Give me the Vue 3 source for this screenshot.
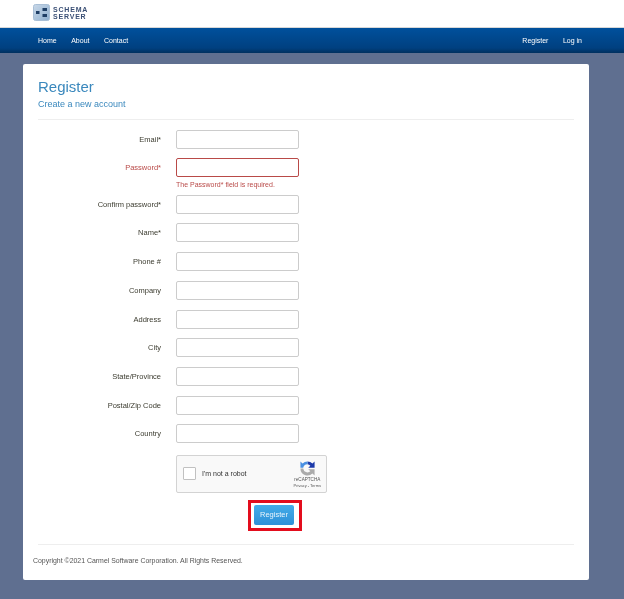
<script setup>
const fields = [
  { label: 'Email*' },
  { label: 'Password*', error: 'The Password* field is required.' },
  { label: 'Confirm password*' },
  { label: 'Name*' },
  { label: 'Phone #' },
  { label: 'Company' },
  { label: 'Address' },
  { label: 'City' },
  { label: 'State/Province' },
  { label: 'Postal/Zip Code' },
  { label: 'Country' }
]
</script>

<template>
  <div class="page">
    <header class="brand">
      <svg class="logo" width="17" height="17" viewBox="0 0 17 17" aria-hidden="true">
        <defs>
          <linearGradient id="logoFill" x1="0" y1="0" x2="1" y2="1">
            <stop offset="0" stop-color="#c9d8e8" />
            <stop offset="1" stop-color="#8fb0d0" />
          </linearGradient>
        </defs>
        <rect x="0.5" y="0.5" width="16" height="16" rx="2" fill="url(#logoFill)" stroke="#a9bfd6" />
        <rect x="3" y="7" width="3.5" height="3" fill="#1f3f66" />
        <rect x="9.5" y="4" width="4.5" height="3" fill="#1f3f66" />
        <rect x="9.5" y="10" width="4.5" height="3" fill="#1f3f66" />
      </svg>
      <div class="brand-name">SCHEMA<br />SERVER</div>
    </header>

    <nav class="nav">
      <div class="nav-group">
        <a>Home</a>
        <a>About</a>
        <a>Contact</a>
      </div>
      <div class="nav-group">
        <a>Register</a>
        <a>Log in</a>
      </div>
    </nav>

    <main class="card">
      <h1>Register</h1>
      <h2>Create a new account</h2>
      <hr class="rule" />

      <form class="form" @submit.prevent>
        <template v-for="f in fields" :key="f.label">
          <label :class="{ bad: f.error }">{{ f.label }}</label>
          <div class="control">
            <input type="text" :class="{ bad: f.error }" />
            <span v-if="f.error" class="error">{{ f.error }}</span>
          </div>
        </template>

        <div class="recaptcha">
          <span class="check"></span>
          <span class="robot">I'm not a robot</span>
          <div class="rc-brand">
            <svg width="17" height="17" viewBox="0 0 24 24" aria-hidden="true">
              <path d="M12 2a10 10 0 0 1 7 3l3-3v9h-9l3-3a6 6 0 0 0-4-2z" fill="#1c3aa9" />
              <path d="M12 2a10 10 0 0 0-7 3L2 2v9h4a6 6 0 0 1 6-5z" fill="#4a90e2" />
              <path d="M2 12a10 10 0 0 0 17 7l3 3v-9h-9l3 3a6 6 0 0 1-10-4z" fill="#ababab" />
            </svg>
            <span class="rc-name">reCAPTCHA</span>
            <span class="rc-links">Privacy - Terms</span>
          </div>
        </div>

        <div class="submit-row">
          <div class="highlight">
            <button type="submit">Register</button>
          </div>
        </div>
      </form>

      <hr class="rule foot-rule" />
      <p class="copy">Copyright ©2021 Carmel Software Corporation. All Rights Reserved.</p>
    </main>
  </div>
</template>

<style>
html, body { margin: 0; background: #5f6f90; }
</style>

<style scoped>
.page {
  height: 599px;
  overflow: hidden;
  background: #5f6f90;
  font-family: "Liberation Sans", Arial, sans-serif;
  filter: blur(0.35px);
}
.brand {
  height: 28px;
  box-sizing: border-box;
  background: #fff;
  border-bottom: 1px solid #d8d8d8;
  display: flex;
  align-items: flex-start;
  gap: 3px;
  padding: 4px 0 0 33px;
}
.brand-name {
  font-size: 7px;
  font-weight: 700;
  line-height: 7px;
  letter-spacing: 0.8px;
  color: #3a4f75;
  margin-top: 2px;
}
.nav {
  height: 25px;
  background: linear-gradient(#00509c, #004080 80%, #00305f);
  display: flex;
  justify-content: space-between;
  align-items: center;
  padding: 0 42px 0 38px;
}
.nav-group { display: flex; gap: 14.5px; }
.nav a { color: #fff; font-size: 7px; }
.card {
  margin: 11px 35px 0 23px;
  height: 516px;
  box-sizing: border-box;
  background: #fff;
  border-radius: 2px;
  padding: 14px 15px 0;
}
h1 {
  margin: 0;
  font-size: 15px;
  font-weight: 400;
  line-height: 17px;
  color: #3a88bd;
}
h2 {
  margin: 4px 0 0;
  font-size: 9px;
  font-weight: 400;
  line-height: 11px;
  color: #3a88bd;
}
.rule {
  border: 0;
  border-top: 1px solid #eeeeee;
  margin: 9px 0 0;
}
.form {
  display: grid;
  grid-template-columns: 123px 123px;
  column-gap: 15px;
  row-gap: 9.7px;
  margin-top: 9.6px;
  align-items: start;
}
label {
  font-size: 7.5px;
  line-height: 19px;
  text-align: right;
  color: #3c3c30;
}
label.bad { color: #b94a48; }
.control { display: flex; flex-direction: column; }
input {
  height: 19px;
  width: 123px;
  box-sizing: border-box;
  border: 1px solid #cccccc;
  border-radius: 2px;
  background: #fff;
  padding: 0;
}
input.bad { border-color: #b94a48; }
.error {
  font-size: 7px;
  line-height: 9px;
  margin-top: 3px;
  margin-bottom: -4.2px;
  color: #b94a48;
}
.recaptcha {
  grid-column: 2;
  width: 151px;
  height: 38px;
  margin-top: 2px;
  box-sizing: border-box;
  background: #f9f9f9;
  border: 1px solid #d3d3d3;
  border-radius: 2px;
  display: flex;
  align-items: center;
  padding: 0 5px 0 6px;
}
.check {
  width: 13px;
  height: 13px;
  box-sizing: border-box;
  border: 1px solid #c1c1c1;
  border-radius: 1px;
  background: #fff;
  margin-right: 6px;
}
.robot { font-size: 7px; color: #333; }
.rc-brand {
  margin-left: auto;
  display: flex;
  flex-direction: column;
  align-items: center;
  color: #555;
}
.rc-name { font-size: 4.6px; line-height: 6px; }
.rc-links { font-size: 4px; line-height: 5px; }
.submit-row {
  grid-column: 1 / 3;
  display: flex;
  padding-left: 210px;
  margin-top: -3px;
}
.highlight {
  flex: none;
  box-sizing: border-box;
  width: 54px;
  height: 31px;
  border: 3px solid #e30d1d;
  padding: 2px 5px 3px 3px;
  background: #fff;
}
button {
  display: block;
  width: 100%;
  height: 100%;
  border: 0;
  padding: 0;
  border-radius: 2px;
  background: linear-gradient(#44ace8, #2d90d8);
  color: #e8f4fc;
  font-family: inherit;
  font-size: 7.5px;
}
.foot-rule { margin-top: 13px; }
.copy {
  margin: 11px 0 0 -5px;
  font-size: 6.93px;
  line-height: 9px;
  color: #555;
}
</style>
